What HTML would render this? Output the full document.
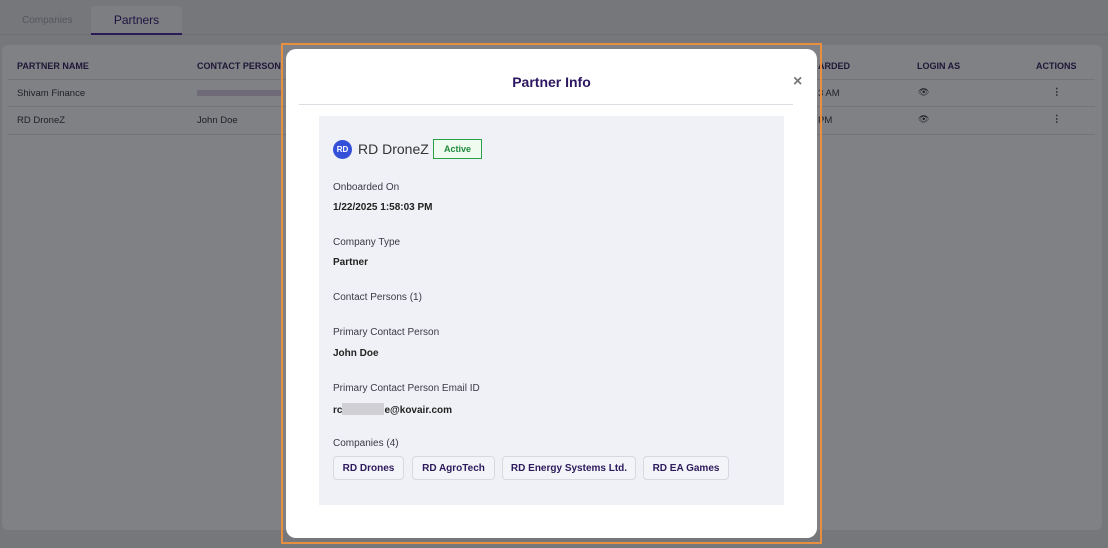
<!DOCTYPE html>
<html><head><style>
*{box-sizing:border-box;margin:0;padding:0}
body{width:1108px;height:548px;overflow:hidden;background:#76777b;font-family:"Liberation Sans",sans-serif;position:relative}
.abs{position:absolute}
.tabline{left:0;top:34px;width:1108px;height:1px;background:#6f7074}
.tab2{left:91px;top:6px;width:91px;height:29px;background:#7d7e82;border-bottom:2px solid #2b1a55;border-radius:4px 4px 0 0;text-align:center;line-height:29px;font-size:12px;color:#1f1240}
.tab1{left:22px;top:15px;font-size:10px;color:#55565c}
.card{left:2px;top:45px;width:1100px;height:485px;background:#808185;border-radius:6px}
.th{font-size:9px;font-weight:bold;color:#1e1636;top:61px}
.td{font-size:9.5px;color:#1e1e26}
.row{left:8px;width:1087px;height:1px;background:#737478}
.orange{left:281px;top:43px;width:541px;height:501px;border:2px solid #e88f3f}
.modal{left:286px;top:49px;width:531px;height:489px;background:#fff;border-radius:10px}
.title{left:0;width:531px;top:25px;text-align:center;font-size:14px;color:#2d1760;font-weight:bold}
.hr{left:13px;top:55px;width:494px;height:1px;background:#dcdde2}
.x{left:507px;top:24px;font-size:16px;color:#777;font-weight:bold}
.panel{left:33px;top:67px;width:465px;height:389px;background:#f0f1f6}
.lbl{font-size:10px;color:#3a3a44;left:14px}
.val{font-size:10px;color:#222;font-weight:bold;left:14px}
.chip{height:24px;border:1px solid #d8d9e0;border-radius:4px;font-size:10px;font-weight:bold;color:#2c1a5c;text-align:center;line-height:24px;background:#f3f4f8}
</style></head><body>
<div class="abs tabline"></div>
<div class="abs tab1">Companies</div>
<div class="abs tab2">Partners</div>
<div class="abs card"></div>
<div class="abs th" style="left:17px">PARTNER NAME</div>
<div class="abs th" style="left:197px">CONTACT PERSON</div>
<div class="abs th" style="left:818px">ARDED</div>
<div class="abs th" style="left:917px">LOGIN AS</div>
<div class="abs th" style="left:1036px">ACTIONS</div>
<div class="abs row" style="top:79px"></div>
<div class="abs row" style="top:106px"></div>
<div class="abs row" style="top:134px"></div>
<div class="abs td" style="left:17px;top:88px">Shivam Finance</div>
<div class="abs" style="left:197px;top:90px;width:85px;height:6px;background:#6e6a78"></div>
<div class="abs td" style="left:17px;top:115px">RD DroneZ</div>
<div class="abs td" style="left:197px;top:115px">John Doe</div>
<div class="abs td" style="left:818px;top:88px">3 AM</div>
<div class="abs td" style="left:818px;top:115px">PM</div>
<div class="abs td" style="left:918px;top:87px;font-size:9px">👁</div>
<div class="abs td" style="left:918px;top:114px;font-size:9px">👁</div>
<div class="abs td" style="left:1052px;top:87px;font-weight:bold">⋮</div>
<div class="abs td" style="left:1052px;top:114px;font-weight:bold">⋮</div>
<div class="abs orange"></div>
<div class="abs modal">
 <div class="abs title">Partner Info</div>
 <div class="abs x">×</div>
 <div class="abs hr"></div>
 <div class="abs panel">
  <div class="abs" style="left:14px;top:24px;width:19px;height:19px;border-radius:50%;background:#3550d8;color:#fff;font-size:8px;font-weight:bold;text-align:center;line-height:19px">RD</div>
  <div class="abs" style="left:39px;top:25px;font-size:14px;color:#333">RD DroneZ</div>
  <div class="abs" style="left:114px;top:23px;width:49px;height:20px;border:1px solid #2aa04a;background:#f0fbf0;color:#1f8a3e;font-size:9px;font-weight:bold;text-align:center;line-height:18px">Active</div>
  <div class="abs lbl" style="top:66px">Onboarded On</div>
  <div class="abs val" style="top:86px">1/22/2025 1:58:03 PM</div>
  <div class="abs lbl" style="top:121px">Company Type</div>
  <div class="abs val" style="top:141px">Partner</div>
  <div class="abs lbl" style="top:176px">Contact Persons (1)</div>
  <div class="abs lbl" style="top:211px">Primary Contact Person</div>
  <div class="abs val" style="top:232px">John Doe</div>
  <div class="abs lbl" style="top:267px">Primary Contact Person Email ID</div>
  <div class="abs val" style="top:287px">rc<span style="display:inline-block;width:42px;height:12px;background:#d0d0d4;vertical-align:-2px"></span>e@kovair.com</div>
  <div class="abs lbl" style="top:322px">Companies (4)</div>
 </div>
 <div class="abs chip" style="left:47px;width:71px;top:407px">RD Drones</div>
 <div class="abs chip" style="left:126px;width:83px;top:407px">RD AgroTech</div>
 <div class="abs chip" style="left:216px;width:134px;top:407px">RD Energy Systems Ltd.</div>
 <div class="abs chip" style="left:357px;width:86px;top:407px">RD EA Games</div>
</div>
</body></html>
